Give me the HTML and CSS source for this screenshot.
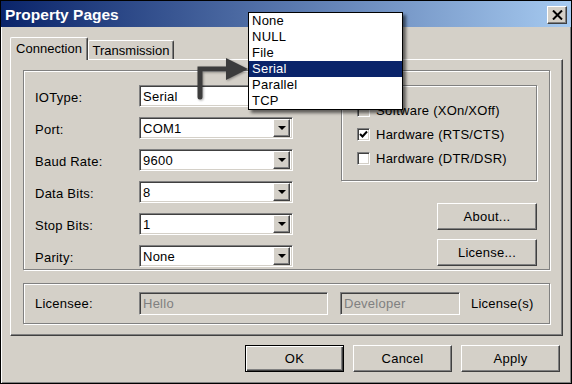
FILE: index.html
```html
<!DOCTYPE html>
<html lang="en">
<head>
    <meta charset="UTF-8">
    <title>Property Pages</title>
    <link rel="stylesheet" href="styles.css">
</head>
<body>
    <div class="window">
        <div class="titlebar">
            <span class="title">Property Pages</span>
            <div class="close">
                <svg width="11" height="10" viewBox="0 0 11 10"><path d="M1 0.5 L10 9.5 M10 0.5 L1 9.5" stroke="#000" stroke-width="2"/></svg>
            </div>
        </div>

        <div class="client">
            <div class="tabs">
                <div class="tab active">Connection</div>
                <div class="tab trans">Transmission</div>
            </div>

            <div class="panel">
                <div class="group main">
                    <div class="fields">
                        <div class="row"><span class="label">IOType:</span><div class="combo"><span>Serial</span><span class="drop"><i></i></span></div></div>
                        <div class="row"><span class="label">Port:</span><div class="combo"><span>COM1</span><span class="drop"><i></i></span></div></div>
                        <div class="row"><span class="label">Baud Rate:</span><div class="combo"><span>9600</span><span class="drop"><i></i></span></div></div>
                        <div class="row"><span class="label">Data Bits:</span><div class="combo"><span>8</span><span class="drop"><i></i></span></div></div>
                        <div class="row"><span class="label">Stop Bits:</span><div class="combo"><span>1</span><span class="drop"><i></i></span></div></div>
                        <div class="row"><span class="label">Parity:</span><div class="combo"><span>None</span><span class="drop"><i></i></span></div></div>
                    </div>

                    <div class="side">
                        <div class="group flow">
                            <div class="check"><span class="box disabled"></span>Software (XOn/XOff)</div>
                            <div class="check"><span class="box"><svg width="9" height="9" viewBox="0 0 9 9"><path d="M1 4 L3.5 6.5 L8 1.5" stroke="#000" stroke-width="2" fill="none"/></svg></span>Hardware (RTS/CTS)</div>
                            <div class="check"><span class="box"></span>Hardware (DTR/DSR)</div>
                        </div>
                        <div class="side-buttons">
                            <button class="btn">About...</button>
                            <button class="btn">License...</button>
                        </div>
                    </div>
                </div>

                <div class="group licensee">
                    <span class="label">Licensee:</span>
                    <div class="field name">Hello</div>
                    <div class="field company">Developer</div>
                    <span>License(s)</span>
                </div>
            </div>

            <div class="actions">
                <button class="btn default">OK</button>
                <button class="btn">Cancel</button>
                <button class="btn">Apply</button>
            </div>
        </div>

        <!-- callout arrow from the IOType box to the open list -->
        <svg class="pointer" width="62" height="50" viewBox="0 0 62 50">
            <path d="M10 45 V17 H40" stroke="#3c3c3c" stroke-width="5" fill="none" stroke-linecap="round"/>
            <polygon points="36,6 58,17 36,28" fill="#3c3c3c"/>
        </svg>

        <ul class="dropdown">
            <li>None</li>
            <li>NULL</li>
            <li>File</li>
            <li class="selected">Serial</li>
            <li>Parallel</li>
            <li>TCP</li>
        </ul>
    </div>
</body>
</html>
```

FILE: styles.css
```css
* {
    box-sizing: border-box;
}
body {
    margin: 0;
    font-family: "Liberation Sans", Arial, sans-serif;
    font-size: 13px;
    letter-spacing: 0.25px;
    color: #000;
    background: #d4d0c8;
}
.window {
    position: relative;
    width: 572px;
    height: 384px;
    background: #d4d0c8;
    border: 1px solid #000;
    box-shadow: inset 1px 1px 0 #fff, inset -1px -1px 0 #808080;
    overflow: hidden;
}
.titlebar {
    height: 26px;
    display: flex;
    align-items: center;
    justify-content: space-between;
    padding: 1px 4px 0 4px;
    background: linear-gradient(to right, #0a246a, #a6caf0);
    color: #fff;
}
.title {
    font-weight: bold;
    font-size: 15.5px;
    letter-spacing: 0;
}
.close {
    width: 20px;
    height: 18px;
    display: flex;
    align-items: center;
    justify-content: center;
    background: #d4d0c8;
    border: 1px solid;
    border-color: #fff #404040 #404040 #fff;
    box-shadow: inset -1px -1px 0 #808080;
}
.client {
    padding: 10px 8px 0 9px;
}
.tabs {
    display: flex;
    align-items: flex-end;
    height: 22px;
}
.tab {
    height: 19px;
    display: flex;
    align-items: center;
    justify-content: center;
    letter-spacing: 0;
    border: 1px solid;
    border-color: #fff #404040 transparent #fff;
    border-bottom: none;
    border-radius: 2px 2px 0 0;
    box-shadow: inset -1px 0 0 #808080;
}
.tab.active {
    width: 78px;
    height: 23px;
    margin-bottom: -1px;
    position: relative;
    z-index: 1;
    background: #d4d0c8;
    padding-bottom: 2px;
}
.tab.trans {
    width: 86px;
}
.panel {
    height: 277px;
    border: 1px solid;
    border-color: #fff #404040 #404040 #fff;
    box-shadow: inset -1px -1px 0 #808080;
    padding: 10px 12px 0 12px;
}
.group {
    border: 1px solid #808080;
    box-shadow: 1px 1px 0 #fff, inset 1px 1px 0 #fff;
}
.main {
    height: 200px;
    display: flex;
    padding: 14px 0 0 11px;
}
.fields {
    display: flex;
    flex-direction: column;
    gap: 10px;
}
.row {
    display: flex;
    align-items: center;
    height: 22px;
}
.label {
    width: 104px;
    padding-top: 3px;
}
.combo {
    width: 154px;
    height: 22px;
    display: flex;
    align-items: center;
    justify-content: space-between;
    padding: 0 2px 0 3px;
    background: #fff;
    border: 1px solid;
    border-color: #808080 #fff #fff #808080;
    box-shadow: inset 1px 1px 0 #404040, inset -1px -1px 0 #d4d0c8;
}
.drop {
    width: 17px;
    height: 18px;
    display: flex;
    align-items: center;
    justify-content: center;
    background: #d4d0c8;
    border: 1px solid;
    border-color: #fff #404040 #404040 #fff;
    box-shadow: inset -1px -1px 0 #808080;
}
.drop i {
    width: 0;
    height: 0;
    border-left: 4px solid transparent;
    border-right: 4px solid transparent;
    border-top: 4px solid #000;
}
.side {
    margin-left: 48px;
    width: 196px;
    display: flex;
    flex-direction: column;
    align-items: flex-end;
}
.flow {
    width: 196px;
    height: 96px;
    padding: 16px 0 0 15px;
    display: flex;
    flex-direction: column;
    gap: 8px;
}
.check {
    display: flex;
    align-items: center;
    height: 16px;
}
.box {
    width: 13px;
    height: 13px;
    margin-right: 6px;
    display: flex;
    align-items: center;
    justify-content: center;
    background: #fff;
    border: 1px solid;
    border-color: #808080 #fff #fff #808080;
    box-shadow: inset 1px 1px 0 #404040, inset -1px -1px 0 #d4d0c8;
}
.box.disabled {
    background: #d4d0c8;
}
.side-buttons {
    margin-top: 22px;
    display: flex;
    flex-direction: column;
    gap: 9px;
}
.btn {
    width: 100px;
    height: 27px;
    padding: 0;
    font: inherit;
    letter-spacing: inherit;
    color: #000;
    background: #d4d0c8;
    border: 1px solid;
    border-color: #fff #404040 #404040 #fff;
    box-shadow: inset -1px -1px 0 #808080;
}
.licensee {
    margin-top: 13px;
    height: 41px;
    display: flex;
    align-items: center;
    padding-left: 11px;
}
.licensee .label {
    padding-top: 0;
}
.field {
    height: 23px;
    display: flex;
    align-items: center;
    padding-left: 3px;
    color: #808080;
    background: #d4d0c8;
    border: 1px solid;
    border-color: #808080 #fff #fff #808080;
    box-shadow: inset 1px 1px 0 #404040;
}
.name {
    width: 189px;
    margin-right: 12px;
}
.company {
    width: 120px;
    margin-right: 11px;
}
.actions {
    display: flex;
    justify-content: flex-end;
    gap: 9px;
    margin-top: 9px;
    padding-right: 3px;
}
.actions .btn {
    width: 99px;
}
.btn.default {
    border-color: #000;
    box-shadow: inset 1px 1px 0 #fff, inset -1px -1px 0 #404040, inset -2px -2px 0 #808080;
}
.pointer {
    position: absolute;
    left: 189px;
    top: 51px;
    filter: drop-shadow(1px 1px 1px rgba(0, 0, 0, 0.35));
}
.dropdown {
    position: absolute;
    left: 247px;
    top: 11px;
    width: 155px;
    margin: 0;
    padding: 0;
    list-style: none;
    background: #fff;
    border: 1px solid #000;
    box-shadow: 3px 3px 3px rgba(0, 0, 0, 0.55);
}
.dropdown li {
    height: 16px;
    line-height: 16px;
    padding-left: 3px;
}
.dropdown li.selected {
    background: #0a246a;
    color: #fff;
}
```
